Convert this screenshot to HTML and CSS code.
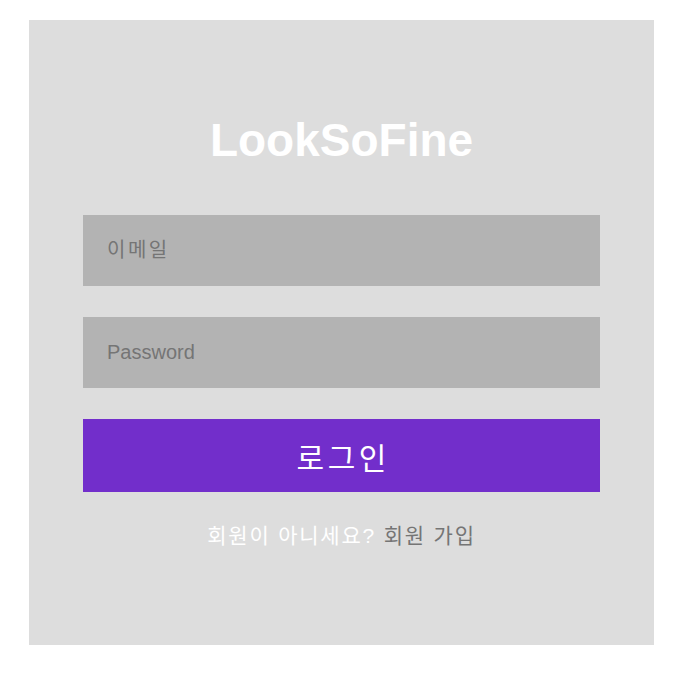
FILE: index.html
```html
<!DOCTYPE html>
<html lang="ko">
<head>
<meta charset="utf-8">
<title>LookSoFine</title>
<link rel="stylesheet" href="styles.css">
</head>
<body>
<div class="card">
  <h1 class="title">LookSoFine</h1>
  <form class="form">
    <input class="field field-email" type="email" placeholder="이메일">
    <input class="field" type="password" placeholder="Password">
    <button class="submit" type="button">로그인</button>
  </form>
  <p class="signup">회원이 아니세요? <a class="signup-link" href="#">회원 가입</a></p>
</div>
</body>
</html>
```

FILE: styles.css
```css
html, body {
  margin: 0;
  padding: 0;
  background: #ffffff;
}
body {
  padding-top: 20px;
  font-family: "Liberation Sans", "Noto Sans CJK KR", Arial, sans-serif;
}
.card {
  width: 625px;
  height: 625px;
  box-sizing: border-box;
  margin: 0 auto;
  background: #dddddd;
  padding: 93px 54px 0;
}
.title {
  margin: 0;
  font-size: 46px;
  line-height: 55px;
  font-weight: bold;
  color: #ffffff;
  text-align: center;
}
.form {
  margin-top: 47px;
  display: flex;
  flex-direction: column;
  gap: 31px;
}
.field {
  display: block;
  width: 100%;
  height: 71px;
  box-sizing: border-box;
  margin: 0;
  border: none;
  outline: none;
  background: #b3b3b3;
  padding: 0 24px;
  font-family: "Liberation Sans", "Noto Sans CJK KR", Arial, sans-serif;
  font-size: 20px;
  color: #333333;
}
.field::placeholder {
  color: #757575;
}
.field-email::placeholder {
  letter-spacing: 2.5px;
}
.submit {
  display: block;
  width: 100%;
  height: 73px;
  margin: 0;
  border: none;
  background: #722ecb;
  color: #ffffff;
  font-family: "Liberation Sans", "Noto Sans CJK KR", Arial, sans-serif;
  font-size: 30px;
  letter-spacing: 3.5px;
  padding: 0 0 0 3.5px;
  cursor: pointer;
}
.signup {
  margin: 29px 0 0;
  text-align: center;
  font-size: 21px;
  line-height: 30px;
  letter-spacing: 1.8px;
  color: #ffffff;
}
.signup-link {
  color: #757575;
  text-decoration: none;
}
```
